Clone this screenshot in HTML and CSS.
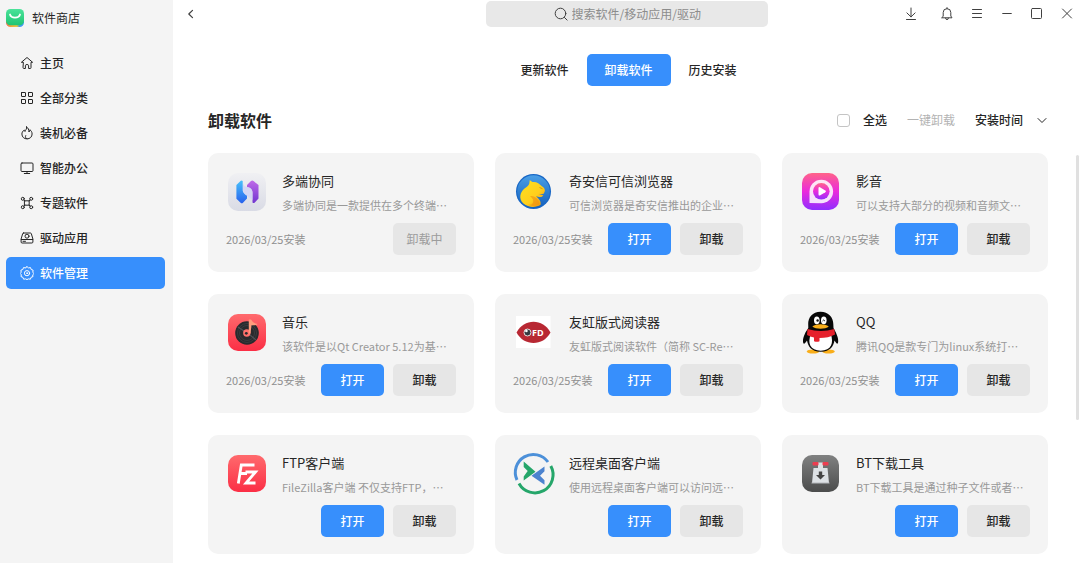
FILE: index.html
```html
<!DOCTYPE html>
<html lang="zh-CN">
<head>
<meta charset="utf-8">
<meta name="viewport" content="width=device-width, initial-scale=1">
<title>软件商店</title>
<link rel="stylesheet" href="styles.css">
</head>
<body>
<div class="app">
  <aside class="sidebar">
    <div class="brand">
      <svg class="brand-logo" viewBox="0 0 18 18" aria-hidden="true">
        <defs>
          <linearGradient id="lg" x1="0" y1="0" x2="0" y2="1"><stop offset="0" stop-color="#4be39a"/><stop offset="1" stop-color="#1fc573"/></linearGradient>
          <linearGradient id="lb" x1="0" y1="0" x2="1" y2="0"><stop offset="0" stop-color="#e86a50"/><stop offset=".3" stop-color="#f0a83c"/><stop offset=".6" stop-color="#e8c840"/><stop offset=".75" stop-color="#3f9bf0"/><stop offset="1" stop-color="#3f9bf0"/></linearGradient>
        </defs>
        <rect y="5" width="18" height="13" rx="4.500" fill="url(#lb)"/>
        <rect width="18" height="16.200" rx="4.500" fill="url(#lg)"/>
        <path d="M4 5.500c1.200 4.200 8.800 4.200 10 0" fill="none" stroke="#fff" stroke-width="1.800" stroke-linecap="round"/>
      </svg>
      <span>软件商店</span>
    </div>
    <nav class="nav">
      <a class="nav-item" href="#home"><svg class="icon" viewBox="0 0 14 14"><path d="M3 6.300H1.400L7 1.500l5.600 4.800H11v5.400q0 .8-.8.800H8.600V9.700Q8.600 8.500 7 8.500T5.400 9.700v2.800H3.800q-.8 0-.8-.8z"/></svg>主页</a>
      <a class="nav-item" href="#all"><svg class="icon" viewBox="0 0 14 14"><rect x="1.500" y="1.500" width="4" height="4" rx=".3"/><rect x="8.500" y="1.500" width="4" height="4" rx=".3"/><rect x="1.500" y="8.500" width="4" height="4" rx=".3"/><rect x="8.500" y="8.500" width="4" height="4" rx=".3"/></svg>全部分类</a>
      <a class="nav-item" href="#essential"><svg class="icon" viewBox="0 0 14 14"><path d="M6.600.9c.5 2-1 3-1.600 4.600-.5-.4-.7-.9-.7-1.500C2.600 5.200 1.900 6.500 1.900 8c0 3 2.200 4.900 5.100 4.900s5.100-2 5.100-4.900c0-1.800-.8-3.200-2.200-4.300.1 1-.2 1.800-1 2.300C9 3.900 8.300 1.900 6.600.9zM7 12.700c-1.500-.3-2-1.800-1.300-3.100"/></svg>装机必备</a>
      <a class="nav-item" href="#office"><svg class="icon" viewBox="0 0 14 14"><rect x="1" y="2" width="12" height="8.500" rx="1"/><path d="M7 10.500v1.900M4.300 12.500h5.400"/></svg>智能办公</a>
      <a class="nav-item" href="#topics"><svg class="icon" viewBox="0 0 14 14"><rect x="4.800" y="4.800" width="4.400" height="4.400"/><path d="M4.900 4.900 3.900 4M9.100 4.900l1-.9M4.900 9.100l-1 1M9.100 9.100l1 1"/><circle cx="2.800" cy="2.800" r="1.500"/><circle cx="11.200" cy="2.800" r="1.500"/><circle cx="2.800" cy="11.200" r="1.500"/><circle cx="11.200" cy="11.200" r="1.500"/></svg>专题软件</a>
      <a class="nav-item" href="#drivers"><svg class="icon" viewBox="0 0 14 14"><path d="M3.500 2h7q.6 0 .8.600L12.900 8v3q0 1-1 1H2.100q-1 0-1-1V8l1.600-5.400Q2.900 2 3.500 2zM1.300 8.500h11.400M3 10.300h2.500"/><circle cx="7" cy="5.200" r="2"/></svg>驱动应用</a>
      <a class="nav-item active" href="#manage" aria-current="page"><svg class="icon" viewBox="0 0 14 14"><path d="m7 .6 1.500 1.300 2-.3.700 1.900 1.900.7-.3 2L14 7.500l-1.300 1.300.3 1.800-1.900.7-.7 1.900-2-.3L7 13.600l-1.400-.7-2 .3-.7-1.900-1.900-.7.300-1.800L.2 7.500l1-1.300-.3-2 1.900-.7.700-1.900 2 .3z"/><circle cx="7" cy="7.200" r="2.600"/><circle cx="7" cy="7.200" r=".5"/></svg>软件管理</a>
    </nav>
  </aside>

  <main class="main">
    <header class="topbar">
      <button class="icon-btn back" type="button" aria-label="返回"><svg class="icon" viewBox="0 0 14 14"><path d="M8.500 3.300 4.800 7l3.700 3.700" stroke-width="1.200"/></svg></button>
      <label class="search">
        <svg class="icon" viewBox="0 0 14 14"><circle cx="6.500" cy="6.500" r="5.300"/><path d="m10.400 10.400 2.700 2.700"/></svg>
        <input type="search" aria-label="搜索" placeholder="搜索软件/移动应用/驱动">
      </label>
      <div class="window-controls">
        <button class="icon-btn download" type="button" aria-label="下载"><svg class="icon" viewBox="0 0 14 14"><path d="M7 1v8.800M2.900 5.900 7 9.900l4.100-4M2.500 12.500h9"/></svg></button>
        <button class="icon-btn" type="button" aria-label="通知"><svg class="icon" viewBox="0 0 14 14"><path d="M7 .6v1M2 10.800h10L10.800 9V5.500a3.800 3.800 0 0 0-7.600 0V9zM5.600 11.200a1.400 1.400 0 0 0 2.800 0"/></svg></button>
        <button class="icon-btn" type="button" aria-label="菜单"><svg class="icon" viewBox="0 0 14 14"><path d="M2.500 2.500h9M2.500 6.500h9M2.500 10.500h9"/></svg></button>
        <button class="icon-btn" type="button" aria-label="最小化"><svg class="icon" viewBox="0 0 14 14"><path d="M2.700 6.500h8.600"/></svg></button>
        <button class="icon-btn" type="button" aria-label="最大化"><svg class="icon" viewBox="0 0 14 14"><rect x="1.500" y="1.500" width="10" height="10" rx="1"/></svg></button>
        <button class="icon-btn" type="button" aria-label="关闭"><svg class="icon" viewBox="0 0 14 14"><path d="m2.500 2 9 9M11.500 2l-9 9"/></svg></button>
      </div>
    </header>

    <div class="tabs">
      <button class="tab" type="button">更新软件</button>
      <button class="tab active" type="button">卸载软件</button>
      <button class="tab" type="button">历史安装</button>
    </div>

    <div class="toolbar">
      <h1>卸载软件</h1>
      <div class="actions">
        <label class="select-all"><input type="checkbox">全选</label>
        <button class="bulk" type="button" disabled>一键卸载</button>
        <div class="sort">
          <select aria-label="排序"><option>安装时间</option></select>
          <svg class="icon" viewBox="0 0 14 14"><path d="m4 5.500 4 4 4-4"/></svg>
        </div>
      </div>
    </div>

    <div class="content">
      <div class="grid">
        <article class="card">
          <svg class="app-icon" viewBox="0 0 42 42" aria-hidden="true">
            <defs>
              <linearGradient id="a1" x1="0" y1="0" x2="0" y2="1"><stop offset="0" stop-color="#f0f0f3"/><stop offset="1" stop-color="#d9dbe5"/></linearGradient>
              <linearGradient id="a2" x1="0" y1="0" x2="0" y2="1"><stop offset="0" stop-color="#48c1fb"/><stop offset="1" stop-color="#2861ed"/></linearGradient>
              <linearGradient id="a3" x1="0" y1="0" x2="0" y2="1"><stop offset="0" stop-color="#c06be8"/><stop offset="1" stop-color="#7136d0"/></linearGradient>
            </defs>
            <rect x="2" y="2" width="38" height="38" rx="10" fill="url(#a1)"/>
            <path d="M14.500 10q1-1 2.200 0v9.500q.2 2.500 4.300 5v3l-4 4.200q-1.200 1-2.400 0l-4.200-4V14z" fill="url(#a2)"/>
            <path d="M21 14l4-4q1.300-1 2.500 0l5 4v13.500l-3.700 4q-1.300 1-2.300 0V21q-.5-4-5.500-5z" fill="url(#a3)"/>
            <path d="M17 12.500q1 3.500 5 3.500 4.500 1 4.500 6v7l-5-4q-4.500-2-4.500-6z" fill="#cfd2f6" opacity=".8"/>
          </svg>
          <div class="info"><h2>多端协同</h2><p>多端协同是一款提供在多个终端…</p></div>
          <div class="card-foot"><time datetime="2026-03-25">2026/03/25安装</time><button class="btn" type="button" disabled>卸载中</button></div>
        </article>

        <article class="card">
          <svg class="app-icon" viewBox="0 0 42 42" aria-hidden="true">
            <defs>
              <linearGradient id="b1" x1="0" y1="0" x2="0" y2="1"><stop offset="0" stop-color="#4a9fe6"/><stop offset="1" stop-color="#1460bd"/></linearGradient>
              <linearGradient id="b2" x1="0" y1="0" x2="1" y2="1"><stop offset="0" stop-color="#ffe21f"/><stop offset=".6" stop-color="#ffce1c"/><stop offset="1" stop-color="#ee8b0a"/></linearGradient>
            </defs>
            <circle cx="20.500" cy="20.500" r="17.500" fill="#1766c5"/>
            <circle cx="20.500" cy="20.500" r="16.300" fill="url(#b1)"/>
            <path d="M16.700 9.300c.9 0 1.700 1.200 2.700 1.800 3.600-.8 7 1.500 9.500 4.200 2.200 1.200 3 2.800 3 4.600l-1.200 2.800c-1.600.5-3.300.2-4.700.4l4.300 1.200-1.300 1.400c-2.300.9-4.100-.3-6-.5 3 2.600 5.300 5 4.600 8.500-4.500 3-12 3.200-17.200-1.200-5-4.600-3.400-11.200.8-14.800 3.200-2.600 4.600-3.400 5.100-5.300z" fill="url(#b2)"/>
            <path d="M14 33.500c5 1 7-1 6-5q-1-2-3-3.500 5-.5 8 4c1.500 2 1.700 3 1.300 4.500-4 1.800-8 2-12.300 0z" fill="#f08c12" opacity=".6"/>
            <path d="M26.500 16.500l3 1.200" stroke="#c98209" stroke-width=".7"/>
          </svg>
          <div class="info"><h2>奇安信可信浏览器</h2><p>可信浏览器是奇安信推出的企业…</p></div>
          <div class="card-foot"><time datetime="2026-03-25">2026/03/25安装</time><button class="btn primary" type="button">打开</button><button class="btn" type="button">卸载</button></div>
        </article>

        <article class="card">
          <svg class="app-icon" viewBox="0 0 42 42" aria-hidden="true">
            <defs><linearGradient id="c1" x1="0" y1="0" x2="0" y2="1"><stop offset="0" stop-color="#ff6389"/><stop offset=".5" stop-color="#ea2bdc"/><stop offset="1" stop-color="#8f2eff"/></linearGradient></defs>
            <rect x="2" y="2" width="37" height="37" rx="10" fill="url(#c1)"/>
            <path d="M9.500 32V20.500a11.800 11.800 0 1 1 11.800 11.800z" fill="#fff" opacity=".86"/>
            <circle cx="21.300" cy="20.300" r="8.300" fill="url(#c1)"/>
            <path d="M18.500 17.400q0-2 1.800-1l5 3q1.400.9 0 1.800l-5 3q-1.800 1-1.800-1z" fill="#fff"/>
          </svg>
          <div class="info"><h2>影音</h2><p>可以支持大部分的视频和音频文…</p></div>
          <div class="card-foot"><time datetime="2026-03-25">2026/03/25安装</time><button class="btn primary" type="button">打开</button><button class="btn" type="button">卸载</button></div>
        </article>

        <article class="card">
          <svg class="app-icon" viewBox="0 0 42 42" aria-hidden="true">
            <defs><linearGradient id="d1" x1="0" y1="0" x2="0" y2="1"><stop offset="0" stop-color="#ff6a6d"/><stop offset="1" stop-color="#fb2e45"/></linearGradient></defs>
            <rect x="2" y="2" width="38" height="37" rx="10" fill="url(#d1)"/>
            <circle cx="21" cy="21" r="11.800" fill="#292a2d"/>
            <g fill="none" stroke="#45464a" stroke-width=".6"><circle cx="21" cy="21" r="9.500"/><circle cx="21" cy="21" r="7.500"/></g>
            <path d="m12 15 6 4M24 23l6 5" stroke="#505156" stroke-width="1.200"/>
            <circle cx="20.800" cy="21" r="3.700" fill="#ff706c"/><circle cx="20.300" cy="21.300" r="1.400" fill="#292a2d"/>
            <path d="M22.800 21.500V7.500h2.200q2 4 6.500 4.500-1.200 1.800-6 1.200L24.500 21.500z" fill="#ff9b7c"/>
          </svg>
          <div class="info"><h2>音乐</h2><p>该软件是以Qt Creator 5.12为基…</p></div>
          <div class="card-foot"><time datetime="2026-03-25">2026/03/25安装</time><button class="btn primary" type="button">打开</button><button class="btn" type="button">卸载</button></div>
        </article>

        <article class="card">
          <svg class="app-icon" viewBox="0 0 42 42" aria-hidden="true">
            <rect x="3" y="4" width="34.500" height="32" fill="#fff"/>
            <path d="M3.500 20.500C11 6 30 6 37.500 20.500 30 34.500 11 34.500 3.500 20.500z" fill="#b82833"/>
            <circle cx="14.500" cy="20.500" r="3.500" fill="#343a41" stroke="#e8dcdc" stroke-width="1"/><circle cx="13.400" cy="18.900" r="1.300" fill="#fff"/>
            <text x="19" y="24" class="logo-text">FD</text>
          </svg>
          <div class="info"><h2>友虹版式阅读器</h2><p>友虹版式阅读软件（简称 SC-Re…</p></div>
          <div class="card-foot"><time datetime="2026-03-25">2026/03/25安装</time><button class="btn primary" type="button">打开</button><button class="btn" type="button">卸载</button></div>
        </article>

        <article class="card">
          <svg class="app-icon" viewBox="0 0 42 42" aria-hidden="true">
            <ellipse cx="13" cy="39.500" rx="6.300" ry="2" fill="#f9ae1a"/><ellipse cx="28.500" cy="39.500" rx="6.300" ry="2" fill="#f9ae1a"/>
            <path d="M20.500-.3C12.500-.3 8 5.500 8.200 12l.1 4C5.800 19.500 2.800 25 3 29.500c.2 3.600 2 2.200 4-1C8 34 11 39.700 20.700 39.700S33.500 34 34.500 28.500c2 3.200 3.400 4.600 3.700 1 .4-4.500-2.800-10-4.700-13.500l-.2-4C33.400 5.500 28.500-.3 20.500-.3z" fill="#080808"/>
            <path d="M11 22c-4 9-.8 16.700 9.700 16.700S34.300 31 30.500 21z" fill="#fff"/>
            <path d="M7.500 17q13.500 4 26.800 0l.7 5.500q-6.500 3.500-15.500 3.500v3.300q-2.500 1-5.500 0V25.500q-4-.8-7-2.500z" fill="#e6212c"/>
            <ellipse cx="16.800" cy="8.300" rx="2.800" ry="3.900" fill="#fff"/><ellipse cx="23.800" cy="8.300" rx="2.800" ry="3.900" fill="#fff"/>
            <circle cx="17.600" cy="8.500" r="1.200" fill="#111"/><path d="M22.500 9q1-2 2.400 0" fill="none" stroke="#111"/>
            <path d="M12.300 14.400c4-2.800 12.500-2.800 16.500 0-3.400 3-13 3-16.500 0z" fill="#f9ae1a"/>
          </svg>
          <div class="info"><h2>QQ</h2><p>腾讯QQ是款专门为linux系统打…</p></div>
          <div class="card-foot"><time datetime="2026-03-25">2026/03/25安装</time><button class="btn primary" type="button">打开</button><button class="btn" type="button">卸载</button></div>
        </article>

        <article class="card">
          <svg class="app-icon" viewBox="0 0 42 42" aria-hidden="true">
            <rect x="2" y="2" width="38" height="37" rx="10" fill="url(#d1)"/>
            <path d="M12.300 30.500 15.300 12H28.500M14 20.500h7M19.500 19h10L20 30h9.500" fill="none" stroke="#fff" stroke-width="2.800"/>
          </svg>
          <div class="info"><h2>FTP客户端</h2><p>FileZilla客户端 不仅支持FTP，…</p></div>
          <div class="card-foot"><button class="btn primary" type="button">打开</button><button class="btn" type="button">卸载</button></div>
        </article>

        <article class="card">
          <svg class="app-icon" viewBox="0 0 42 42" aria-hidden="true">
            <g fill="none" stroke-width="3"><path d="M4 27A18 18 0 0 1 35 9" stroke="#4c90d9"/><path d="M37.800 13A18 18 0 0 1 6 30.500" stroke="#25a66a"/></g>
            <path d="M10.700 8.500 22.500 18.700 10.700 27.500v-4l4-5.500-4-4z" fill="#25a66a"/>
            <path d="M31.500 13.500 18.500 22.700l13 9v-4.500L27 22.700l4.500-4.500z" fill="#4c83cf"/>
          </svg>
          <div class="info"><h2>远程桌面客户端</h2><p>使用远程桌面客户端可以访问远…</p></div>
          <div class="card-foot"><button class="btn primary" type="button">打开</button><button class="btn" type="button">卸载</button></div>
        </article>

        <article class="card">
          <svg class="app-icon" viewBox="0 0 42 42" aria-hidden="true">
            <defs><linearGradient id="e1" x1="0" y1="0" x2="0" y2="1"><stop offset="0" stop-color="#808181"/><stop offset="1" stop-color="#4b4c4c"/></linearGradient></defs>
            <rect x="2" y="2" width="37" height="37" rx="10" fill="url(#e1)"/>
            <path d="M13.500 15H18V9.500h5V15h4.500L29 30H12z" fill="#dde1e5"/>
            <rect x="12.500" y="9" width="6" height="3.500" rx="1" fill="#ec3d50"/><rect x="22.500" y="9" width="6" height="3.500" rx="1" fill="#ec3d50"/>
            <path d="M18.800 18.500h3.400V22h2.800l-4.500 4.500L16 22h2.800z" fill="#444"/>
            <path d="M11.500 30h18" stroke="#b4b7bb"/>
          </svg>
          <div class="info"><h2>BT下载工具</h2><p>BT下载工具是通过种子文件或者…</p></div>
          <div class="card-foot"><button class="btn primary" type="button">打开</button><button class="btn" type="button">卸载</button></div>
        </article>
      </div>
      <div class="scroll-track"><div class="scroll-thumb"></div></div>
    </div>
  </main>
</div>
</body>
</html>
```
FILE: styles.css
```css
* { box-sizing: border-box; }

body {
  margin: 0;
  background: #fff;
  color: #262626;
  font: 12px/16px "Noto Sans CJK SC", sans-serif;
}

button, input, select {
  margin: 0;
  padding: 0;
  border: 0;
  background: none;
  color: inherit;
  font: inherit;
}

h1, h2, p { margin: 0; }

.app { display: flex; height: 100vh; overflow: hidden; }

.icon {
  flex: none;
  width: 14px;
  height: 14px;
  fill: none;
  stroke: currentColor;
  stroke-width: 1;
  stroke-linejoin: round;
  stroke-linecap: round;
}

/* Sidebar */
.sidebar { flex: none; width: 173px; background: #f4f4f4; }

.brand {
  display: flex;
  align-items: center;
  gap: 8px;
  height: 35px;
  padding-left: 6px;
}
.brand-logo { width: 18px; height: 18px; }

.nav {
  display: flex;
  flex-direction: column;
  gap: 3px;
  padding: 12px 8px 0 6px;
}
.nav-item {
  display: flex;
  align-items: center;
  gap: 6px;
  height: 32px;
  padding-left: 14px;
  border-radius: 5px;
  color: inherit;
  font-weight: 500;
  text-decoration: none;
}
.nav-item.active { background: #378ffc; color: #fff; }

/* Top bar */
.main { display: flex; flex: 1; flex-direction: column; min-width: 0; }

.topbar {
  display: grid;
  grid-template-columns: 1fr minmax(180px, 282px) 1fr;
  align-items: center;
  height: 28px;
  padding: 0 1px;
  color: #404040;
}
.icon-btn {
  display: flex;
  align-items: center;
  justify-content: center;
  width: 24px;
  height: 24px;
}
.back { margin-left: 5px; }
.search {
  display: flex;
  align-items: center;
  gap: 4px;
  height: 26px;
  padding-left: 68px;
  border-radius: 5px;
  background: #e8e8e8;
}
.search input { width: 100%; outline: 0; }
.search input::placeholder { color: #8c8c8c; opacity: 1; }
.window-controls { display: flex; justify-content: flex-end; gap: 6px; }
.download { margin-right: 6px; }

/* Tabs */
.tabs { display: flex; justify-content: center; padding: 26px 0 0 4px; }
.tab { width: 84px; height: 32px; border-radius: 5px; font-weight: 500; }
.tab.active { background: #378ffc; color: #fff; }

/* Toolbar */
.toolbar {
  display: flex;
  align-items: center;
  justify-content: space-between;
  padding: 22px 32px 20px 35px;
}
h1 { font-size: 16px; line-height: 24px; font-weight: 700; }
.actions { display: flex; align-items: center; gap: 20px; font-weight: 500; }
.select-all { display: flex; align-items: center; gap: 13px; }
.select-all input {
  width: 13px;
  height: 13px;
  border: 1px solid #c4c4c4;
  border-radius: 3px;
  background: #fff;
  appearance: none;
}
.bulk { color: #b3b3b3; font-weight: 400; }
.sort { display: grid; align-items: center; }
.sort select { grid-area: 1 / 1; padding-right: 24px; appearance: none; }
.sort .icon { grid-area: 1 / 1; justify-self: end; pointer-events: none; }

/* Cards */
.content { display: flex; flex: 1; justify-content: space-between; min-height: 0; }
.grid {
  display: grid;
  flex: 1;
  grid-template-columns: repeat(3, minmax(0, 1fr));
  align-content: start;
  gap: 22px 21px;
  padding: 1px 27px 9px 35px;
}
.card {
  display: grid;
  grid-template-columns: 42px minmax(0, 1fr);
  gap: 10px 14px;
  padding: 18px 18px 17px;
  border-radius: 10px;
  background: #f4f4f4;
}
.app-icon { width: 42px; height: 42px; overflow: visible; }
.logo-text { fill: #fff; font: 700 9px "Open Sans", sans-serif; }
.info { display: flex; flex-direction: column; gap: 6px; white-space: nowrap; }
.info h2 { font-size: 13px; line-height: 20px; font-weight: 400; }
.info p {
  overflow: hidden;
  color: #999;
  font-size: 11px;
  text-overflow: ellipsis;
}
.card-foot {
  display: flex;
  grid-column: 1 / -1;
  align-items: center;
  justify-content: flex-end;
  gap: 9px;
}
.card-foot time {
  margin-right: auto;
  color: #8f8f8f;
  font-size: 11px;
  white-space: nowrap;
}
.btn {
  flex: none;
  width: 63px;
  height: 32px;
  border-radius: 5px;
  background: #e6e6e6;
  font-weight: 500;
}
.btn.primary { background: #378ffc; color: #fff; }
.btn:disabled { color: #9c9c9c; font-weight: 400; }

.scroll-track { flex: none; width: 5px; padding: 3px 1px 0; }
.scroll-thumb { width: 3px; height: 65%; border-radius: 2px; background: #e0e0e0; }
```
